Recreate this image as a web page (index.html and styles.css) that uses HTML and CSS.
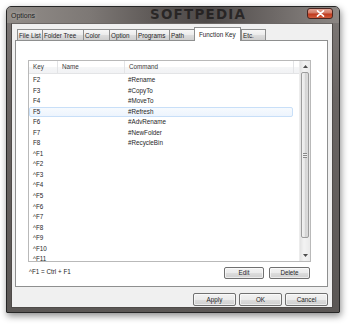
FILE: index.html
```html
<!DOCTYPE html>
<html>
<head>
<meta charset="utf-8">
<link rel="stylesheet" href="styles.css">
</head>
<body>
<div class="desktop">
  <div class="window">
    <div class="titlebar">
      <span class="title">Options</span>
      <span class="wm">SOFTPEDIA</span>
      <div class="close">
        <svg width="9" height="7" viewBox="0 0 9 7"><path d="M1.5 0.8 L7.5 6.2 M7.5 0.8 L1.5 6.2" stroke="#fff" stroke-width="1.6" stroke-linecap="round"/></svg>
      </div>
    </div>
    <div class="client">
      <div class="tabs">
        <div class="tab w26">File List</div>
        <div class="tab w42">Folder Tree</div>
        <div class="tab w27">Color</div>
        <div class="tab w28">Option</div>
        <div class="tab w34">Programs</div>
        <div class="tab w26">Path</div>
        <div class="tab active">Function Key</div>
        <div class="tab w25">Etc.</div>
      </div>
      <div class="panel">
        <div class="list">
          <div class="grid">
            <div class="header">
              <div class="hc c-key">Key</div>
              <div class="hc c-name">Name</div>
              <div class="hc c-cmd">Command</div>
              <div class="hc c-fill"></div>
            </div>
            <div class="rows">
              <div class="row"><span class="c-key">F2</span><span class="c-name"></span><span class="c-cmd">#Rename</span></div>
              <div class="row"><span class="c-key">F3</span><span class="c-name"></span><span class="c-cmd">#CopyTo</span></div>
              <div class="row"><span class="c-key">F4</span><span class="c-name"></span><span class="c-cmd">#MoveTo</span></div>
              <div class="row sel"><span class="c-key">F5</span><span class="c-name"></span><span class="c-cmd">#Refresh</span></div>
              <div class="row"><span class="c-key">F6</span><span class="c-name"></span><span class="c-cmd">#AdvRename</span></div>
              <div class="row"><span class="c-key">F7</span><span class="c-name"></span><span class="c-cmd">#NewFolder</span></div>
              <div class="row"><span class="c-key">F8</span><span class="c-name"></span><span class="c-cmd">#RecycleBin</span></div>
              <div class="row"><span class="c-key">^F1</span></div>
              <div class="row"><span class="c-key">^F2</span></div>
              <div class="row"><span class="c-key">^F3</span></div>
              <div class="row"><span class="c-key">^F4</span></div>
              <div class="row"><span class="c-key">^F5</span></div>
              <div class="row"><span class="c-key">^F6</span></div>
              <div class="row"><span class="c-key">^F7</span></div>
              <div class="row"><span class="c-key">^F8</span></div>
              <div class="row"><span class="c-key">^F9</span></div>
              <div class="row"><span class="c-key">^F10</span></div>
              <div class="row"><span class="c-key">^F11</span></div>
            </div>
          </div>
          <div class="scroll">
            <div class="arrow">
              <svg width="5" height="3" viewBox="0 0 5 3"><path d="M0 3 L2.5 0 L5 3 Z" fill="#4d4d4d"/></svg>
            </div>
            <div class="track">
              <div class="thumb"><div class="grip"></div></div>
            </div>
            <div class="arrow">
              <svg width="5" height="3" viewBox="0 0 5 3"><path d="M0 0 L2.5 3 L5 0 Z" fill="#4d4d4d"/></svg>
            </div>
          </div>
        </div>
        <div class="below">
          <span class="note">^F1 = Ctrl + F1</span>
          <div class="btns">
            <button class="btn w40">Edit</button>
            <button class="btn w41">Delete</button>
          </div>
        </div>
      </div>
      <div class="footer">
        <button class="btn w43">Apply</button>
        <button class="btn w43">OK</button>
        <button class="btn w43">Cancel</button>
      </div>
    </div>
  </div>
</div>
</body>
</html>
```
FILE: styles.css
```css
* { box-sizing: border-box; }
html, body { margin: 0; padding: 0; background: #ffffff; }
body {
  width: 350px; height: 326px; overflow: hidden;
  font-family: "Liberation Sans", Arial, sans-serif;
  font-size: 6.3px; color: #262626;
}
.desktop { padding: 6px 0 0 6px; }
.window {
  width: 334px; height: 307px;
  border: 1px solid #262626;
  border-radius: 5px 5px 1px 1px;
  background: linear-gradient(to bottom, #7e7977 0%, #6a6563 30%, #5b5755 100%);
  box-shadow: 1px 3px 7px rgba(0,0,0,0.45);
  display: flex; flex-direction: column;
}
.titlebar {
  height: 16px; position: relative; overflow: hidden;
  background: linear-gradient(to right, #928d89 0%, #7d7875 25%, #5d5856 45%, #4e4a49 60%, #6d6866 80%, #8c8784 100%);
  border-radius: 4px 4px 0 0;
  display: flex; align-items: center;
}
.title { margin-left: 4px; font-size: 7px; color: #1c1c1c; text-shadow: 0 0 4px rgba(255,255,255,0.55); }
.wm {
  position: absolute; left: 143px; top: 0px;
  font-family: "DejaVu Sans", sans-serif; font-weight: bold; font-size: 13.5px; line-height: 15px;
  letter-spacing: 1.2px; color: rgba(22,20,20,0.72);
}
.close {
  position: absolute; right: 6px; top: 1px;
  width: 26px; height: 11px;
  border: 1px solid #4a2621; border-radius: 3px;
  background: linear-gradient(to bottom, #e4a393 0%, #d27a64 45%, #c0391d 55%, #cf5c3c 100%);
  display: flex; align-items: center; justify-content: center;
}
.client {
  flex: 1;
  margin: 0 6px 4px 4px;
  background: #f0f0f0;
  border: 1px solid #4f4b49;
  border-top-color: #6b6765;
  padding: 3px 4px 0 3px;
  display: flex; flex-direction: column;
}
.tabs { display: flex; height: 13px; padding-left: 2px; position: relative; z-index: 2; }
.tab {
  margin-top: 2px; height: 11px;
  border: 1px solid #8e8f8f; border-bottom: none; margin-right: -1px;
  background: linear-gradient(to bottom, #f7f7f7 0%, #ebebeb 50%, #dddddd 51%, #cfcfcf 100%);
  padding: 1px 0 0 1px; line-height: 9px; white-space: nowrap;
}
.tab.active {
  margin-top: 0; height: 14px; width: 47px;
  background: #ffffff; padding: 2px 0 0 4px;
  margin-left: 0; margin-right: 0;
}
.w25 { width: 25px; } .w26 { width: 26px; } .w27 { width: 27px; } .w28 { width: 28px; }
.w34 { width: 34px; } .w42 { width: 42px; }
.panel {
  width: 313px; height: 247px;
  background: #ffffff; border: 1px solid #8e8f8f;
  padding: 19px 16px 0 12px;
  display: flex; flex-direction: column;
}
.list {
  height: 202px; border: 1px solid #b9b9b9;
  display: flex; background: #fff;
}
.grid { flex: 1; display: flex; flex-direction: column; overflow: hidden; }
.header {
  height: 13px; display: flex;
  background: linear-gradient(to bottom, #ffffff 0%, #ffffff 50%, #f5f6f7 51%, #f1f2f4 100%);
  border-bottom: 1px solid #e3e4e6;
  color: #3a3a3a;
}
.hc { line-height: 12px; padding-left: 4px; border-right: 1px solid #e3e4e6; }
.hc.c-fill { flex: 1; border-right: none; }
.c-key { width: 29px; }
.c-name { width: 67px; }
.c-cmd { width: 169px; }
.rows { margin-top: 1px; flex: 1; overflow: hidden; }
.row {
  height: 10.55px; line-height: 8.55px; display: flex; width: 264px;
  border: 1px solid transparent; border-radius: 2px;
}
.row span { padding-left: 3px; white-space: nowrap; }
.row .c-key { width: 29px; }
.row .c-name { width: 67px; }
.row.sel { border-color: #c8dff8; background: linear-gradient(to bottom, #f6fafe, #edf4fd); }
.scroll {
  width: 11px; display: flex; flex-direction: column;
  background: linear-gradient(to right, #e3e3e3, #f3f3f3 40%, #eaeaea);
  border-left: 1px solid #ececec;
}
.arrow { height: 11px; display: flex; align-items: center; justify-content: center; }
.track { flex: 1; padding: 0 1px; }
.thumb {
  height: 166px;
  border: 1px solid #9c9c9c; border-radius: 2px;
  background: linear-gradient(to right, #f3f3f3, #e6e6e6 45%, #d4d4d4 55%, #dcdcdc);
  display: flex; align-items: center; justify-content: center;
}
.grip {
  width: 4px; height: 5px;
  background: repeating-linear-gradient(to bottom, #8a8a8a 0 1px, #f0f0f0 1px 2px);
}
.below { display: flex; justify-content: space-between; align-items: flex-start; margin-top: 5px; }
.note { padding-left: 1px; line-height: 8px; margin-top: 1px; }
.btns { display: flex; gap: 5px; margin-right: 1px; }
.btn {
  height: 12px; padding: 0;
  font-family: inherit; font-size: 6.3px; color: #1e1e1e;
  border: 1px solid #707070; border-radius: 2px;
  background: linear-gradient(to bottom, #f2f2f2 0%, #ebebeb 50%, #dddddd 51%, #cfcfcf 100%);
  box-shadow: inset 0 0 0 1px rgba(255,255,255,0.6);
  line-height: 10px;
}
.w40 { width: 40px; } .w41 { width: 41px; } .w43 { width: 43px; }
.footer { display: flex; justify-content: flex-end; gap: 3px; margin-top: 6px; width: 313px; }
.footer .btn { height: 13px; }
```
